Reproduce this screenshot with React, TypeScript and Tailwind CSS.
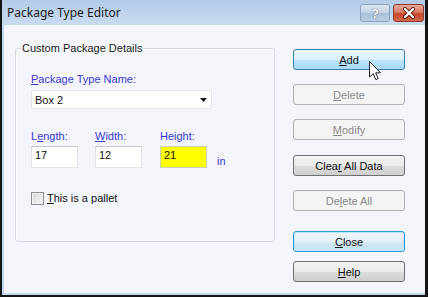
import React from "react";

const U = ({ children }: { children: React.ReactNode }) => (
  <span className="underline underline-offset-[1px] decoration-[1px]">{children}</span>
);

type BtnKind = "hover" | "normal" | "disabled" | "default";

function Btn({ kind, children, className = "" }: { kind: BtnKind; children: React.ReactNode; className?: string }) {
  const styles: Record<BtnKind, string> = {
    hover:
      "border-[#3c7fb1] bg-[linear-gradient(to_bottom,#eaf6fd_0%,#d9f0fc_50%,#bee6fd_51%,#a7d9f5_100%)] text-[#111]",
    normal:
      "border-[#707070] bg-[linear-gradient(to_bottom,#f2f2f2_0%,#ebebeb_50%,#dddddd_51%,#cfcfcf_100%)] text-[#111]",
    disabled: "border-[#adb2b5] bg-[#f4f4f4] text-[#8a8a8a]",
    default:
      "border-[#3399dd] bg-[linear-gradient(to_bottom,#eef6fb_0%,#e3f0f8_50%,#d2e8f5_51%,#c6e1f2_100%)] text-[#111] shadow-[inset_0_0_0_1px_#bfe3fa]",
  };
  return (
    <div
      className={`h-[21px] w-[112px] flex items-center justify-center rounded-[3px] border text-[11px] leading-[14px] ${styles[kind]} ${className}`}
    >
      {children}
    </div>
  );
}

export default function App() {
  return (
    <div
      className="w-[428px] h-[297px] bg-[#151515] pl-[2px] pr-[3px] pb-[2px] overflow-hidden"
      style={{ fontFamily: '"Liberation Sans", Arial, sans-serif' }}
    >
      <div className="relative w-full h-full flex flex-col bg-[#c4d8ee]">
        {/* Title bar */}
        <div className="h-[25px] flex items-center pl-[5px] pr-[1px] bg-[linear-gradient(to_bottom,#b3cbe7,#c9dbef)]">
          <span
            className="text-[12px] leading-[16px] text-[#1b1b1b] mt-[1px]"
            style={{ fontFamily: '"Noto Sans", "Liberation Sans", sans-serif' }}
          >
            Package Type Editor
          </span>
          <div className="ml-auto flex items-center gap-[3px] mt-[1px]">
            <div className="w-[30px] h-[18px] rounded-[3px] border border-[#8ca3bd] bg-[linear-gradient(to_bottom,#dce7f3_0%,#c3d4e7_50%,#a9bfd8_51%,#b9cde3_100%)] flex items-center justify-center">
              <span
                className="text-[13px] leading-[13px] font-bold text-white"
                style={{ textShadow: "0 0 1px #4a5c72, 0 0 1px #4a5c72" }}
              >
                ?
              </span>
            </div>
            <div className="w-[31px] h-[18px] rounded-[3px] border border-[#8d3b2c] bg-[linear-gradient(to_bottom,#e9a99a_0%,#d87d67_45%,#c7452d_55%,#d36a4a_100%)] flex items-center justify-center">
              <svg width="14" height="12" viewBox="0 0 14 12">
                <path d="M3 2 L11 10 M11 2 L3 10" stroke="#5a1d12" strokeWidth="4" strokeLinecap="round" />
                <path d="M3 2 L11 10 M11 2 L3 10" stroke="#ffffff" strokeWidth="2.2" strokeLinecap="round" />
              </svg>
            </div>
          </div>
        </div>

        {/* Client area */}
        <div className="flex-1 ml-[2px] mb-[2px] bg-[#f3f5fa] flex">
          {/* Group box */}
          <fieldset className="ml-[11px] mt-[16px] w-[260px] self-start border border-[#d3d9df] rounded-[3px] pb-[36px] shadow-[inset_1px_1px_0_#ffffff]">
            <legend className="ml-[5px] px-[1px] text-[11px] leading-[14px] text-[#222]">Custom Package Details</legend>
            <div className="pl-[15px] pt-[17px] text-[11px] leading-[14px]">
              <div className="text-[#3838d0]">
                <U>P</U>ackage Type Name:
              </div>
              <div className="mt-[4px] w-[181px] h-[19px] bg-white border border-[#e3e7eb] flex items-center pl-[3px] pr-[4px] text-[#111]">
                <span>Box 2</span>
                <svg className="ml-auto" width="7" height="4" viewBox="0 0 7 4">
                  <path d="M0 0 L7 0 L3.5 4 Z" fill="#111" />
                </svg>
              </div>

              <div className="mt-[20px] flex">
                <div className="w-[47px] flex flex-col">
                  <span className="text-[#3838d0]">
                    L<U>e</U>ngth:
                  </span>
                  <div className="mt-[3px] h-[22px] bg-white border border-[#dde2e7] border-t-[#c3c8cd] pl-[3px] pt-[1px] text-[#111]">
                    17
                  </div>
                </div>
                <div className="ml-[17px] w-[47px] flex flex-col">
                  <span className="text-[#3838d0]">
                    <U>W</U>idth:
                  </span>
                  <div className="mt-[3px] h-[22px] bg-white border border-[#dde2e7] border-t-[#c3c8cd] pl-[3px] pt-[1px] text-[#111]">
                    12
                  </div>
                </div>
                <div className="ml-[18px] w-[47px] flex flex-col">
                  <span className="text-[#3838d0]">Height:</span>
                  <div className="mt-[3px] h-[22px] bg-[#ffff00] border border-[#c6d0b8] pl-[3px] pt-[1px] text-[#111]">
                    21
                  </div>
                </div>
                <span className="ml-[10px] self-end text-[#3838d0]">in</span>
              </div>

              <div className="mt-[23px] flex items-center">
                <div className="w-[13px] h-[13px] border border-[#8f8f8f] bg-[linear-gradient(135deg,#d8d8d8,#f7f7f7)] shadow-[inset_0_0_0_1px_#f4f4f4]" />
                <span className="ml-[3px] text-[#111]">
                  <U>T</U>his is a pallet
                </span>
              </div>
            </div>
          </fieldset>

          {/* Buttons */}
          <div className="ml-[18px] mt-[24px] flex flex-col">
            <Btn kind="hover">
              <span>
                <U>A</U>dd
              </span>
            </Btn>
            <Btn kind="disabled" className="mt-[14px]">
              <span>
                <U>D</U>elete
              </span>
            </Btn>
            <Btn kind="disabled" className="mt-[14px]">
              <span>
                <U>M</U>odify
              </span>
            </Btn>
            <Btn kind="normal" className="mt-[15px]">
              <span>
                Clea<U>r</U> All Data
              </span>
            </Btn>
            <Btn kind="disabled" className="mt-[14px]">
              <span>
                De<U>l</U>ete All
              </span>
            </Btn>
            <Btn kind="default" className="mt-[20px]">
              <span>
                <U>C</U>lose
              </span>
            </Btn>
            <Btn kind="normal" className="mt-[9px]">
              <span>
                <U>H</U>elp
              </span>
            </Btn>
          </div>
        </div>

        {/* Mouse cursor */}
        <svg
          className="absolute left-[367px] top-[61px]"
          width="13"
          height="20"
          viewBox="0 0 13 20"
        >
          <path
            d="M0.5 0.5 L0.5 16 L4.2 12.6 L6.8 18.6 L9.2 17.6 L6.7 11.8 L11.5 11.8 Z"
            fill="#ffffff"
            stroke="#222"
            strokeWidth="1"
            strokeLinejoin="round"
          />
        </svg>
      </div>
    </div>
  );
}
